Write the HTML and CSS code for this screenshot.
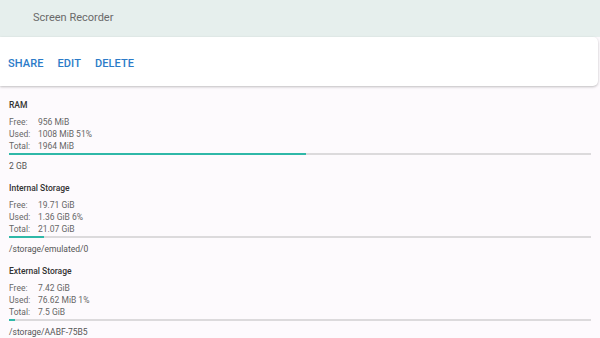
FILE: index.html
```html
<!DOCTYPE html>
<html>
<head>
<meta charset="utf-8">
<link rel="stylesheet" href="styles.css">
</head>
<body>
<header class="topbar"><span class="title">Screen Recorder</span></header>
<div class="card">
  <button class="action">SHARE</button>
  <button class="action">EDIT</button>
  <button class="action">DELETE</button>
</div>
<main class="content">
  <section class="section">
    <div class="heading">RAM</div>
    <div class="stats">
      <span class="label">Free:</span><span>956 MiB</span>
      <span class="label">Used:</span><span>1008 MiB 51%</span>
      <span class="label">Total:</span><span>1964 MiB</span>
    </div>
    <div class="bar"><div class="fill" style="width:51%"></div></div>
    <div class="sub">2 GB</div>
  </section>
  <section class="section">
    <div class="heading">Internal Storage</div>
    <div class="stats">
      <span class="label">Free:</span><span>19.71 GiB</span>
      <span class="label">Used:</span><span>1.36 GiB 6%</span>
      <span class="label">Total:</span><span>21.07 GiB</span>
    </div>
    <div class="bar"><div class="fill" style="width:6%"></div></div>
    <div class="sub">/storage/emulated/0</div>
  </section>
  <section class="section">
    <div class="heading">External Storage</div>
    <div class="stats">
      <span class="label">Free:</span><span>7.42 GiB</span>
      <span class="label">Used:</span><span>76.62 MiB 1%</span>
      <span class="label">Total:</span><span>7.5 GiB</span>
    </div>
    <div class="bar"><div class="fill" style="width:1%"></div></div>
    <div class="sub">/storage/AABF-75B5</div>
  </section>
</main>
</body>
</html>
```
FILE: styles.css
```css
html, body {
  margin: 0;
  padding: 0;
  height: 100%;
}
body {
  background: #fdfafd;
  font-family: Roboto, "Liberation Sans", sans-serif;
  overflow: hidden;
}
.topbar {
  height: 37px;
  background: #e6efed;
  display: flex;
  align-items: center;
  padding-left: 33px;
  box-sizing: border-box;
  padding-bottom: 2px;
}
.title {
  font-size: 11px;
  color: #6a6a6a;
}
.card {
  position: relative;
  width: 598px;
  height: 49px;
  background: #ffffff;
  border-radius: 0 5px 5px 0;
  box-shadow: 0 1px 3px rgba(0,0,0,0.18), 0 1px 2px rgba(0,0,0,0.08);
  display: flex;
  align-items: center;
  gap: 14px;
  padding-left: 8px;
  box-sizing: border-box;
  padding-top: 3px;
}
.action {
  border: 0;
  background: none;
  padding: 0;
  font-family: Roboto, "Liberation Sans", sans-serif;
  font-weight: 500;
  font-size: 11px;
  color: #2b7bc8;
  letter-spacing: 0.1px;
}
.content {
  padding: 12.5px 9px 0 9px;
  display: flex;
  flex-direction: column;
  gap: 10px;
}
.section {
  display: flex;
  flex-direction: column;
  width: 582px;
}
.heading {
  font-size: 8.5px;
  font-weight: 500;
  line-height: 12px;
  color: #333333;
  margin-bottom: 5px;
}
.stats {
  display: grid;
  grid-template-columns: 29px auto;
  font-size: 8.5px;
  line-height: 12px;
  color: #666666;
}
.bar {
  margin-top: 1px;
  height: 2px;
  background: #dcdadc;
}
.fill {
  height: 100%;
  background: #2fb8a8;
}
.sub {
  margin-top: 5px;
  font-size: 8.5px;
  line-height: 12px;
  color: #555555;
}
```
